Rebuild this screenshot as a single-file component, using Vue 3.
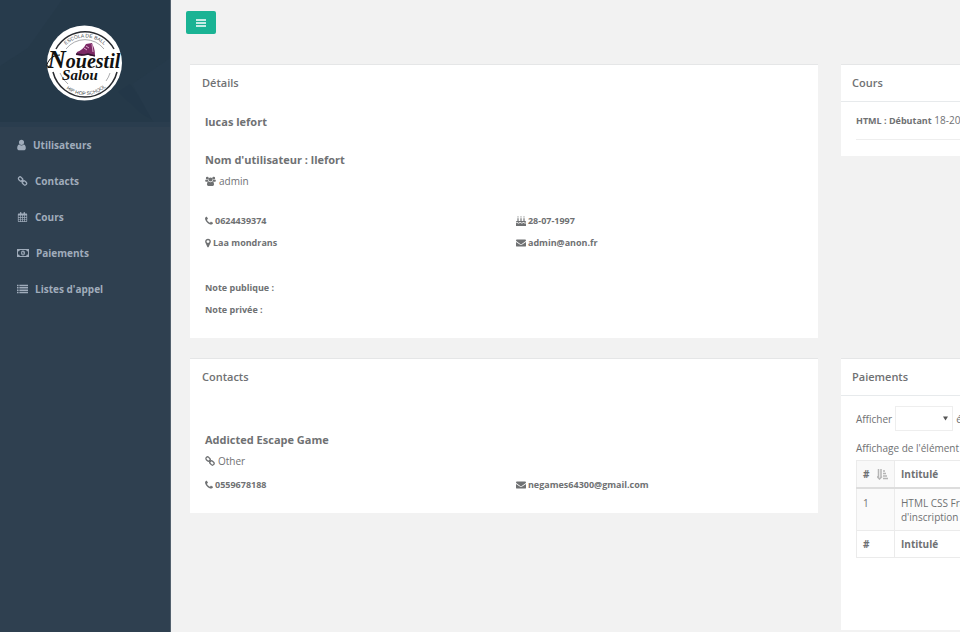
<script setup>
import { h, ref } from 'vue'

const solid = {
  user: ['256 0 1280 1792', 'M1536 1399q0 109-62.5 187t-150.5 78h-854q-88 0-150.5-78t-62.5-187q0-85 8.5-160.5t31.5-152 58.5-131 94-89 134.5-34.5q131 128 313 128t313-128q76 0 134.5 34.5t94 89 58.5 131 31.5 152 8.5 160.5zm-256-887q0 159-112.5 271.5t-271.5 112.5-271.5-112.5-112.5-271.5 112.5-271.5 271.5-112.5 271.5 112.5 112.5 271.5z'],
  phone: ['192 0 1408 1792', 'M1600 1240q0 27-10 70.5t-21 68.5q-21 50-122 106-94 51-186 51-27 0-53-3.5t-57.5-12.5-47-14.5-55.5-20.5-49-18q-98-35-175-83-127-79-264-216t-216-264q-48-77-83-175-3-9-18-49t-20.5-55.5-14.5-47-12.5-57.5-3.5-53q0-92 51-186 56-101 106-122 25-11 68.5-21t70.5-10q14 0 21 3 18 6 53 76 11 19 30 54t35 63.5 31 53.5q3 4 17.5 25t21.5 35.5 7 28.5q0 20-28.5 50t-62 55-62 53-28.5 46q0 9 5 22.5t8.5 20.5 14 24 11.5 19q76 137 174 235t235 174q2 1 19 11.5t24 14 20.5 8.5 22.5 5q18 0 46-28.5t53-62 55-62 50-28.5q14 0 28.5 7t35.5 21.5 25 17.5q25 15 53.5 31t63.5 35 54 30q70 35 76 53 3 7 3 21z'],
  pin: ['384 0 1024 1792', 'M1152 640q0-106-75-181t-181-75-181 75-75 181 75 181 181 75 181-75 75-181zm256 0q0 109-33 179l-364 774q-16 33-47.5 52t-67.5 19-67.5-19-46.5-52l-365-774q-33-70-33-179 0-212 150-362t362-150 362 150 150 362z'],
  calendar: ['0 0 13 14', 'M1 2h2V1q0-1 1-1t1 1v1h3V1q0-1 1-1t1 1v1h2q1 0 1 1v10q0 1-1 1H1q-1 0-1-1V3q0-1 1-1zM1 5v2h2V5zm3 0v2h2V5zm3 0v2h2V5zm3 0v2h2V5zM1 8v2h2V8zm3 0v2h2V8zm3 0v2h2V8zm3 0v2h2V8zM1 11v2h2v-2zm3 0v2h2v-2zm3 0v2h2v-2zm3 0v2h2v-2z'],
  money: ['0 0 15 12', 'M0 1h15v10H0zM3.500 2.200Q3.500 4 1.200 4v4q2.300 0 2.300 1.800h8Q11.500 8 13.800 8V4q-2.300 0-2.300-1.800zM7.500 3Q10 3 10 6T7.500 9 5 6t2.500-3zM7 4.500L6.200 5v.6L7 5.400V7h-.7v.7h2.400V7H8V4.500z'],
  list: ['0 0 14 11', 'M0 0h2v2H0zm3 0h11v2H3zM0 3h2v2H0zm3 0h11v2H3zM0 6h2v2H0zm3 0h11v2H3zM0 9h2v2H0zm3 0h11v2H3z'],
  mail: ['0 0 14 12', 'M1.300 1h11.400Q14 1 14 2.200q0 1-1.200 1.800L8 7.300q-1 .7-2 0L1.200 4Q0 3.200 0 2.200 0 1 1.300 1zM0 4.500l5.300 3.700q1.700 1 3.400 0L14 4.500v5.200q0 1.300-1.300 1.300H1.300Q0 11 0 9.700z'],
  cake: ['0 0 14 14', 'M2 3h1.600v4H2zm4.200 0h1.600v4H6.200zm4.200 0H12v4h-1.600zM2.800 0q1.600 1.700 0 2.600-1.600-.9 0-2.600zM7 0q1.600 1.700 0 2.600Q5.400 1.700 7 0zm4.200 0q1.600 1.700 0 2.600-1.600-.9 0-2.600zM1.300 7h11.400Q14 7 14 8.200v.6q-1.200 1.400-2.400 0-1.100-.9-2.300 0-1.200 1.400-2.300 0-1.200-.9-2.300 0-1.200 1.400-2.300 0Q1.200 8 0 9v-.8Q0 7 1.300 7zM0 10q1.200-.9 2.400.2 1.200.8 2.300 0Q5.900 9 7 10.200q1.200.8 2.300 0 1.200-1.200 2.300 0 1.200.8 2.400-.2v4H0z'],
  users: ['0 0 15 14', 'M3 1a2 2 0 1 1 0 4 2 2 0 0 1 0-4zm9 0a2 2 0 1 1 0 4 2 2 0 0 1 0-4zM7.500 2a2.900 2.900 0 1 1 0 5.800 2.900 2.900 0 0 1 0-5.800zM1.200 4.800Q2.600 6 4 5.400q0 1.600.7 2.600H1.400Q0 8 0 7q0-2 1.200-2.200zm12.600 0Q12.400 6 11 5.400q0 1.600-.7 2.600h3.300Q15 8 15 7q0-2-1.200-2.200zM5 7.600q2.500 2 5 0 2.500.2 2.500 4 0 2.400-2 2.400h-6q-2 0-2-2.400 0-3.800 2.500-4z'],
}

const Icon = (props) => {
  if (props.name === 'link') {
    return h('svg', { viewBox: '0 0 14 14', class: 'icon', 'aria-hidden': 'true', fill: 'none', stroke: 'currentColor', 'stroke-width': 1.8 }, [
      h('rect', { x: 1, y: 2, width: 6.6, height: 4.6, rx: 2.2, transform: 'rotate(45 4.300 4.300)' }),
      h('rect', { x: 6.4, y: 7.4, width: 6.6, height: 4.6, rx: 2.2, transform: 'rotate(45 9.700 9.700)' }),
      h('path', { d: 'M5.500 5.500l3 3' }),
    ])
  }
  const [viewBox, d] = solid[props.name]
  return h('svg', { viewBox, class: 'icon', 'aria-hidden': 'true', fill: 'currentColor', 'fill-rule': 'evenodd' }, [h('path', { d })])
}
Icon.props = ['name']

const menu = [
  { icon: 'user', label: 'Utilisateurs' },
  { icon: 'link', label: 'Contacts' },
  { icon: 'calendar', label: 'Cours' },
  { icon: 'money', label: 'Paiements' },
  { icon: 'list', label: "Listes d'appel" },
]
const pageSize = ref('')
</script>

<template>
  <div class="layout">
    <aside class="sidebar">
      <div class="brand">
        <svg class="facets" viewBox="0 0 170 127" preserveAspectRatio="none" aria-hidden="true">
          <path d="M0 0h62L28 48 0 66z" fill="#273b4c" />
          <path d="M118 92l12-8 26 38-14-8z" fill="#233748" />
          <path d="M132 84l38-26v69h-14z" fill="#263a4b" />
          <path d="M0 122h170v5H0z" fill="#2a3d4e" />
        </svg>
        <svg class="logo" viewBox="0 0 76 76" role="img" aria-label="Nouestil Salou">
          <defs>
            <path id="arc-top" d="M12 30a28 28 0 0 1 52 0" />
            <path id="arc-bottom" d="M9 50a31 31 0 0 0 58 0" />
          </defs>
          <circle cx="37.500" cy="38" r="37.500" fill="#fff" />
          <g fill="none" stroke="#292b30">
            <path d="M9 24a33 33 0 0 1 58 0M6 47a33 33 0 0 0 64 0" stroke-width="1.500" />
            <path d="M19 24a24 24 0 0 1 38 0M13 48a26 26 0 0 0 8 11M63 48a26 26 0 0 1-4 8" stroke-width=".4" />
          </g>
          <text class="ring"><textPath href="#arc-top" startOffset="50%" text-anchor="middle">ESCOLA DE BALL</textPath></text>
          <text class="ring"><textPath href="#arc-bottom" startOffset="52%" text-anchor="middle">HIP HOP SCHOOL</textPath></text>
          <path d="M30 27q6-2 9-8l6-1 2 5q1 3 1 7l-4 1-5-2-4 2-6-1z" fill="#7c2865" />
          <path d="M29 29l8 1 4-1 7 2" fill="none" stroke="#32152f" stroke-width="1.500" />
          <path d="M37 23l3 2m-1-4l3 2m3-4l1 8" fill="none" stroke="#d9a8c9" />
          <text class="word" x="37" y="43" text-anchor="middle"><tspan class="initial">N</tspan>ouestil</text>
          <path d="M3 41q-5 2-2-4 4-7 12-7" fill="none" stroke="#111" />
          <text class="word small" x="33" y="55" text-anchor="middle">Salou</text>
        </svg>
      </div>
      <nav>
        <a v-for="item in menu" :key="item.label" href="#"><Icon :name="item.icon" :class="item.icon" />{{ item.label }}</a>
      </nav>
    </aside>

    <main>
      <button class="toggle" type="button" aria-label="Menu">
        <svg viewBox="0 0 10 8" aria-hidden="true"><path d="M0 1h10M0 4h10M0 7h10" stroke="#fff" stroke-width="1.600" /></svg>
      </button>

      <div class="panels">
        <section class="panel">
          <h2>Détails</h2>
          <div class="body details">
            <h3>lucas lefort</h3>
            <h3 class="login">Nom d'utilisateur : llefort</h3>
            <p class="role"><Icon name="users" class="users" />admin</p>
            <div class="facts">
              <span><Icon name="phone" class="phone" />0624439374</span>
              <span><Icon name="cake" />28-07-1997</span>
              <span><Icon name="pin" class="pin" />Laa mondrans</span>
              <span><Icon name="mail" />admin@anon.fr</span>
            </div>
            <div class="notes">
              <p>Note publique :</p>
              <p>Note privée :</p>
            </div>
          </div>
        </section>

        <section class="panel wide lined">
          <h2>Cours</h2>
          <div class="body">
            <p class="course"><b>HTML : Débutant</b> 18-20</p>
          </div>
        </section>

        <section class="panel">
          <h2>Contacts</h2>
          <div class="body contacts">
            <h3>Addicted Escape Game</h3>
            <p class="role"><Icon name="link" />Other</p>
            <div class="facts">
              <span><Icon name="phone" class="phone" />0559678188</span>
              <span><Icon name="mail" />negames64300@gmail.com</span>
            </div>
          </div>
        </section>

        <section class="panel wide lined payments">
          <h2>Paiements</h2>
          <div class="body">
            <label class="length">Afficher
              <span class="picker">
                <select v-model="pageSize"><option value=""></option><option>10</option><option>25</option></select>
                <svg viewBox="0 0 6 5" aria-hidden="true"><path d="M0 0h6L3 5z" fill="#555" /></svg>
              </span>
              éléments
            </label>
            <p class="info">Affichage de l'élément 1</p>
            <table>
              <thead>
                <tr>
                  <th class="num"><span class="sort">#
                    <svg viewBox="0 0 11 11" aria-hidden="true"><path d="M1.500 0v9M4 0v9M0 7.500L2.500 10 5 7.500M6 9.500h5M6 7h4M6 4.500h3M6 2h2" fill="none" stroke="#b5b5b5" stroke-width="1.500" /></svg>
                  </span></th>
                  <th>Intitulé</th>
                </tr>
              </thead>
              <tbody>
                <tr><td class="num">1</td><td>HTML CSS Frais<br>d'inscription</td></tr>
              </tbody>
              <tfoot>
                <tr><th class="num">#</th><th>Intitulé</th></tr>
              </tfoot>
            </table>
          </div>
        </section>
      </div>
    </main>
  </div>
</template>

<style>
body { margin: 0; background: #f2f2f2; }
</style>

<style scoped>
* { box-sizing: border-box; }
.layout {
  display: flex;
  min-height: 100vh;
  font-family: "Open Sans", "Noto Sans", sans-serif;
  font-size: 10px;
  line-height: 14px;
  color: #6f7173;
}
h2, h3, p { margin: 0; }
.icon { width: 10px; height: 10px; flex: none; }

.sidebar { flex: 0 0 171px; background: #2f4050; border-right: 1px solid #53616e; }
.brand { position: relative; display: flex; justify-content: center; height: 127px; padding-top: 25px; background: #253949; }
.facets { position: absolute; inset: 0; width: 100%; height: 100%; }
.logo { position: relative; width: 76px; height: 76px; overflow: visible; }
.ring { font: 5px "Liberation Sans", sans-serif; fill: #44464b; }
.word { font: italic bold 20px "Liberation Serif", serif; fill: #111; }
.initial { font-size: 25px; }
.word.small { font-size: 15px; }
nav a {
  display: flex;
  align-items: center;
  gap: 7px;
  height: 36px;
  padding-left: 17px;
  font-size: 10px;
  font-weight: 700;
  color: #a0acbb;
  text-decoration: none;
}
nav .icon { width: 11px; }
nav .user { width: 9px; height: 12px; }
nav .money { width: 12px; }

main { flex: 1; min-width: 0; padding: 11px 0 0 19px; overflow: hidden; }
.toggle {
  display: flex;
  align-items: center;
  justify-content: center;
  width: 30px;
  height: 23px;
  margin-left: -4px;
  padding: 0;
  border: 0;
  border-radius: 2px;
  background: #1ab394;
}
.toggle svg { width: 10px; height: 8px; }

.panels {
  display: grid;
  grid-template-columns: minmax(0, 1fr) 119px;
  align-items: start;
  gap: 20px 23px;
  padding-top: 30px;
}
.panel { background: #fff; border-top: 1px solid #e5e6e7; }
.wide { width: 302px; }
h2 { height: 37px; padding: 0 12px; font-size: 11px; line-height: 36px; font-weight: 600; }
.lined h2 { border-bottom: 1px solid #e7eaec; padding: 0 11px; }
.body { padding: 10px 15px 17px; }
h3 { font-size: 11px; line-height: 20px; font-weight: 700; }
.login { margin-top: 18px; }
.role { display: flex; align-items: center; gap: 3px; font-size: 10px; line-height: 22px; }
.role .users { width: 11px; }
.facts { display: grid; grid-template-columns: 52% 1fr; line-height: 22px; font-size: 9px; font-weight: 700; }
.facts span { display: flex; align-items: center; gap: 2px; }
.facts .phone { width: 8px; }
.facts .pin { width: 6px; }
.details .facts { margin-top: 18px; }
.notes { margin-top: 23px; font-size: 9px; line-height: 22px; font-weight: 700; }
.contacts { padding-top: 34px; }
.contacts .facts { margin-top: 2px; }

.course { padding: 1px 0 11px; border-bottom: 1px solid #eee; }
.course b { font-size: 9px; font-weight: 700; }
.wide .body { padding: 10px 15px 16px; }
.payments .body { padding-bottom: 72px; }
.length { display: flex; align-items: center; gap: 3px; height: 25px; }
.picker { position: relative; width: 58px; height: 25px; }
.picker select { appearance: none; width: 100%; height: 100%; border: 1px solid #eee; border-radius: 0; background: #fff; font: inherit; color: inherit; }
.picker svg { position: absolute; right: 5px; top: 10px; width: 5px; height: 5px; pointer-events: none; }
.info { padding: 10px 0 5px; }
table { width: 100%; border-collapse: collapse; border: 1px solid #e7e7e7; }
th, td { padding: 6px; border: 1px solid #ebebeb; text-align: left; vertical-align: top; }
th { font-weight: 700; }
thead th { border-bottom: 2px solid #ddd; }
tbody td { padding-top: 7px; background: #fcfcfc; }
.num { width: 38px; }
thead .num { background: #f9f9f9; }
tbody .num { background: #fafafa; }
.sort { display: flex; align-items: center; justify-content: space-between; }
.sort svg { width: 11px; height: 11px; }
</style>
